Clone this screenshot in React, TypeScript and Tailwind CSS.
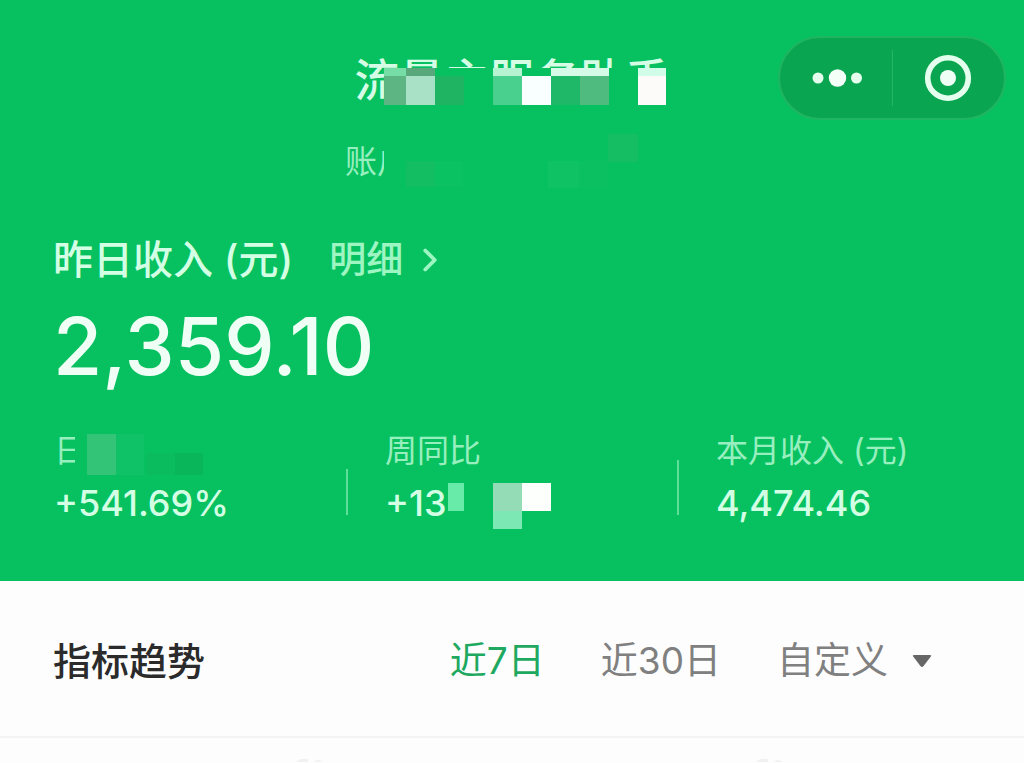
import { useState } from 'react';
import clsx from 'clsx';
import { ChevronRight } from 'lucide-react';

interface Tile {
  x: number;
  y: number;
  w: number;
  h: number;
  fill: string;
}

const BG = '#07c160';

// 标题上的马赛克
const titleTiles: Tile[] = [
  { x: 30, y: 0, w: 290, h: 40, fill: BG },
  { x: 30, y: 0, w: 22, h: 8, fill: '#75dda5' },
  { x: 52, y: 0, w: 29, h: 8, fill: '#58a87c' },
  { x: 139, y: 0, w: 29, h: 8, fill: '#b5f3d3' },
  { x: 197, y: 0, w: 58, h: 8, fill: '#d5fbe8' },
  { x: 284, y: 0, w: 28, h: 8, fill: '#d0fce8' },
  { x: 30, y: 8, w: 22, h: 29, fill: '#5cb582' },
  { x: 52, y: 8, w: 29, h: 29, fill: '#a8e1c5' },
  { x: 81, y: 8, w: 29, h: 29, fill: '#1fb461' },
  { x: 139, y: 8, w: 29, h: 29, fill: '#4ad08e' },
  { x: 168, y: 8, w: 29, h: 29, fill: '#f8fffe' },
  { x: 197, y: 8, w: 29, h: 29, fill: '#1fb768' },
  { x: 226, y: 8, w: 29, h: 29, fill: '#4fbb7e' },
  { x: 284, y: 8, w: 28, h: 29, fill: '#fdfafa' },
];

// 账户行
const accountTiles: Tile[] = [
  { x: 39, y: 0, w: 295, h: 60, fill: BG },
  { x: 61, y: 31, w: 29, h: 26, fill: '#12be61' },
  { x: 90, y: 31, w: 28, h: 26, fill: '#0ac261' },
  { x: 203, y: 31, w: 31, h: 27, fill: '#0fc364' },
  { x: 234, y: 31, w: 29, h: 27, fill: '#0bc060' },
  { x: 263, y: 4, w: 30, h: 28, fill: '#15be63' },
];

const dayTiles: Tile[] = [
  { x: 21, y: 0, w: 130, h: 46, fill: BG },
  { x: 33, y: 3, w: 29, h: 41, fill: '#33c478' },
  { x: 62, y: 3, w: 28, h: 41, fill: '#0fc167' },
  { x: 92, y: 22, w: 29, h: 22, fill: '#0abc5e' },
  { x: 121, y: 22, w: 28, h: 22, fill: '#0ab65a' },
];

const weekTiles: Tile[] = [
  { x: 63, y: 0, w: 104, h: 46, fill: BG },
  { x: 63, y: 0, w: 16, h: 28, fill: '#68eba9' },
  { x: 108, y: 0, w: 29, h: 28, fill: '#93dcb5' },
  { x: 108, y: 28, w: 29, h: 18, fill: '#7ce8b3' },
  { x: 137, y: 0, w: 29, h: 28, fill: '#fdfffd' },
];

function Mosaic({ tiles, className }: { tiles: Tile[]; className?: string }) {
  return (
    <svg
      className={clsx('absolute left-0 overflow-visible', className)}
      width="1"
      height="1"
      shapeRendering="crispEdges"
      aria-hidden="true"
    >
      {tiles.map((t, i) => (
        <rect key={i} x={t.x} y={t.y} width={t.w} height={t.h} fill={t.fill} />
      ))}
    </svg>
  );
}

// 小程序右上角胶囊
function Capsule() {
  return (
    <div className="flex h-[84px] w-[228px] items-center rounded-full border-2 border-[#1fb561] bg-[#0aa551]">
      <button aria-label="更多" className="flex h-full flex-1 items-center justify-center">
        <svg width="52" height="20" viewBox="0 0 52 20" fill="#e4ffee">
          <circle cx="8" cy="10" r="5.5" />
          <circle cx="27.5" cy="10" r="8.7" fill="#f4fff8" />
          <circle cx="46.5" cy="10" r="5.5" />
        </svg>
      </button>
      <div className="h-14 w-px bg-[#25b766]" />
      <button aria-label="关闭" className="flex h-full flex-1 items-center justify-center">
        <svg width="48" height="48" viewBox="0 0 48 48">
          <circle cx="24" cy="24" r="20.3" fill="none" stroke="#e4ffee" strokeWidth="5.6" />
          <circle cx="24" cy="24" r="8" fill="#f0fff6" />
        </svg>
      </button>
    </div>
  );
}

interface StatProps {
  label: string;
  value: string;
  labelTiles?: Tile[];
  valueTiles?: Tile[];
}

function Stat({ label, value, labelTiles, valueTiles }: StatProps) {
  return (
    <div>
      <div className="relative h-10 text-[32px] leading-10 text-[#97efbf]">
        {label}
        {labelTiles && <Mosaic tiles={labelTiles} className="top-0" />}
      </div>
      <div className="relative mt-3 h-10 text-4xl leading-10 font-medium text-[#d3ffe4]">
        {value}
        {valueTiles && <Mosaic tiles={valueTiles} className="top-0" />}
      </div>
    </div>
  );
}

const ranges = ['近7日', '近30日'];

export default function App() {
  const [range, setRange] = useState('近7日');

  return (
    <div className="min-h-screen overflow-hidden bg-[#fdfdfd] font-['Inter','Noto_Sans_CJK_SC',sans-serif]">
      <header className="bg-[#07c160] pt-9 pb-[58px]">
        <div className="grid grid-cols-[1fr_auto_1fr] items-center px-[18px]">
          <div />
          <h1 className="relative pt-1.5 text-[45px] leading-[60px] font-medium whitespace-nowrap text-[#d5fde6]">
            流量主服务助手
            <Mosaic tiles={titleTiles} className="top-[23px]" />
          </h1>
          <div className="flex justify-end">
            <Capsule />
          </div>
        </div>

        <div className="relative mx-auto mt-[22px] h-10 w-[334px] text-[32px] leading-10 text-[#97efbf]">
          账户
          <Mosaic tiles={accountTiles} className="-top-3" />
        </div>

        <div className="mt-[54px] flex h-12 items-center px-[53px] font-medium">
          <span className="text-[40px] leading-[48px] text-[#d3ffe4]">昨日收入 (元)</span>
          <a href="#detail" className="ml-9 flex items-center gap-2 text-[37px] leading-[48px] text-[#9df5c2]">
            明细
            <ChevronRight size={38} strokeWidth={2.4} />
          </a>
        </div>
        <div className="mt-[22px] px-[53px] text-[80px] leading-[80px] font-medium text-[#f0fff6]">2,359.10</div>

        <div className="mt-[45px] grid grid-cols-[292px_331px_1fr] pl-[54px]">
          <Stat label="日环比" value="+541.69%" labelTiles={dayTiles} />
          <div className="flex items-end gap-[37px]">
            <div className="mb-2 h-[46px] w-[2px] bg-[#5fe09a]" />
            <Stat label="周同比" value="+13" valueTiles={weekTiles} />
          </div>
          <div className="flex items-end gap-[37px]">
            <div className="mb-2 h-[55px] w-[2px] bg-[#5fe09a]" />
            <Stat label="本月收入 (元)" value="4,474.46" />
          </div>
        </div>
      </header>

      <section>
        <div className="flex items-center justify-between border-b-2 border-[#f3f3f3] pt-14 pb-[51px] pr-[92px] pl-[53px]">
          <h2 className="text-[38px] leading-[48px] font-medium text-[#2b2b2b]">指标趋势</h2>
          <div className="flex items-center gap-14 text-[37px] leading-[48px] text-[#808080]">
            {ranges.map((r) => (
              <button
                key={r}
                onClick={() => setRange(r)}
                className={clsx(range === r && 'text-[#1fa960]')}
              >
                {r}
              </button>
            ))}
            <button className="flex items-center gap-6">
              自定义
              <svg width="20" height="14" viewBox="0 0 20 14" fill="#666">
                <path d="M2 1h16q2 0 .8 1.6l-7.4 9.6q-1.4 1.6-2.8 0L1.2 2.6Q0 1 2 1z" />
              </svg>
            </button>
          </div>
        </div>
        {/* 图表区顶部 */}
        <div className="flex justify-between pt-5 pr-[238px] pl-[292px]">
          {[0, 1].map((i) => (
            <svg key={i} width="34" height="4" viewBox="0 0 34 4" fill="#f1f1f1" aria-hidden="true">
              <path d="M4 4q4-4 12-3v3zM22 4q3-4 9 0z" />
            </svg>
          ))}
        </div>
      </section>
    </div>
  );
}
